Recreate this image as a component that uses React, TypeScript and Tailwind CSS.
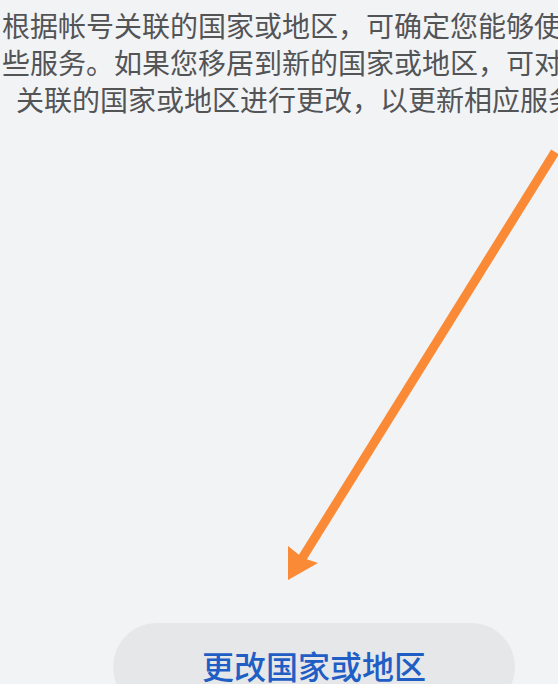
import React from 'react'

// Region settings panel: explanation text, a hint arrow and the change button
const lines = [
  '根据帐号关联的国家或地区，可确定您能够使用哪',
  '些服务。如果您移居到新的国家或地区，可对帐号',
  '关联的国家或地区进行更改，以更新相应服务。',
]

function HintArrow() {
  return (
    <svg
      className="absolute left-0 top-0 pointer-events-none"
      width="558"
      height="684"
      viewBox="0 0 558 684"
    >
      {/* shaft */}
      <line x1="555" y1="152" x2="301" y2="560" stroke="#fa8a35" strokeWidth="9" strokeLinecap="butt" />
      {/* head */}
      <polygon points="288,580 288,546 303,558 318,563" fill="#fa8a35" />
    </svg>
  )
}

export default function App() {
  return (
    <div
      className="relative w-full h-[684px] overflow-hidden bg-[#f2f3f5]"
      style={{ fontFamily: '"Noto Sans CJK SC", "Noto Sans", sans-serif' }}
    >
      <div className="flex flex-col">
        <div className="ml-[2px] w-[616px] shrink-0 pt-[7px] text-center text-[28px] leading-[37px] text-[#535456]">
          {lines.map((line) => (
            <div key={line} className="whitespace-nowrap">
              {line}
            </div>
          ))}
        </div>

        <button className="ml-[113px] mt-[505px] flex h-[88px] w-[402px] shrink-0 items-center justify-center rounded-full bg-[#e6e7e9] pb-[5px] text-[32px] font-medium text-[#1f5ec4]">
          更改国家或地区
        </button>
      </div>

      <HintArrow />
    </div>
  )
}
